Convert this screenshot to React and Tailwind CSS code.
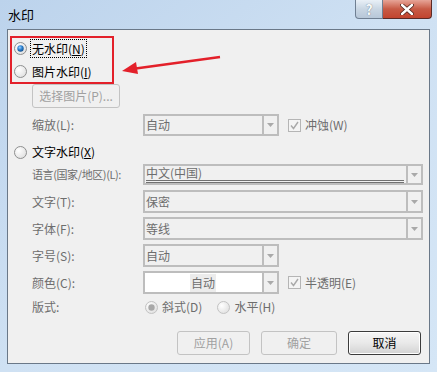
import React from "react";

const font = { fontFamily: '"Noto Sans CJK SC", "Noto Sans", sans-serif' };

const Radio = ({ checked = false, disabled = false }) => (
  <svg width="13" height="13" viewBox="0 0 13 13" className="shrink-0">
    <defs>
      <radialGradient id="rbg" cx="0.35" cy="0.35" r="0.8">
        <stop offset="0" stopColor="#ffffff" />
        <stop offset="1" stopColor="#dcdcdc" />
      </radialGradient>
      <radialGradient id="rdot" cx="0.4" cy="0.35" r="0.7">
        <stop offset="0" stopColor="#9fd4ff" />
        <stop offset="0.5" stopColor="#2a80d0" />
        <stop offset="1" stopColor="#134c86" />
      </radialGradient>
    </defs>
    <circle cx="6.5" cy="6.5" r="6" fill="url(#rbg)" stroke={disabled ? "#c2c2c2" : "#8e8f8f"} />
    {checked && (
      <circle cx="6.5" cy="6.5" r="3.2" fill={disabled ? "#a8a8a8" : "url(#rdot)"} />
    )}
  </svg>
);

const Check = () => (
  <svg width="13" height="13" viewBox="0 0 13 13" className="shrink-0">
    <rect x="0.5" y="0.5" width="12" height="12" fill="#f4f4f4" stroke="#b5b5b5" />
    <path d="M3 6.5 L5.5 9.5 L10 3" fill="none" stroke="#a9a9a9" strokeWidth="1.4" />
  </svg>
);

const Arrow = () => (
  <svg width="7" height="4" viewBox="0 0 7 4">
    <path d="M0 0 H7 L3.5 4 Z" fill="#a9a9a9" />
  </svg>
);

const Combo = ({ w, text, white = false, dbl = false }) => (
  <div className={`${w} h-full flex border-2 border-[#bdbdbd] ${white ? "bg-white" : "bg-[#f0f0f0]"}`}>
    <div className="flex-1 flex items-center pl-[1px] pr-[2px] min-w-0">
      {white ? (
        <div className="flex-1 flex justify-center">
          <span className="bg-[#ececec] px-[1px] text-[#6d6d6d] leading-[18px]">{text}</span>
        </div>
      ) : dbl ? (
        <div className="flex-1 h-full flex items-center border-b-[3px] border-double border-[#707070] text-[#6d6d6d]">
          {text}
        </div>
      ) : (
        <span className="text-[#6d6d6d]">{text}</span>
      )}
    </div>
    <div className="w-[15px] border-l-2 border-[#bdbdbd] flex items-center justify-center bg-[#f0f0f0]">
      <Arrow />
    </div>
  </div>
);

const Row = ({ label, h, mt, small = false, children }) => (
  <div className={`flex items-center ${h} ${mt}`}>
    <div
      className={`w-[135px] pl-[24px] shrink-0 text-[#6d6d6d] whitespace-nowrap ${
        small ? "text-[11px] tracking-[-0.4px]" : ""
      }`}
    >
      {label}
    </div>
    <div className="h-full flex items-center gap-[9px]">{children}</div>
  </div>
);

const App = () => {
  return (
    <div
      className="w-[437px] h-[372px] relative overflow-hidden flex flex-col px-[7px] pb-[8px] bg-gradient-to-br from-[#bcd3ec] via-[#cfe1f3] to-[#d5e6f6] text-[12px] text-black"
      style={font}
    >
      {/* title bar */}
      <div className="h-[29px] flex items-start justify-between shrink-0">
        <div className="pt-[7px] pl-[1px] text-[13px] leading-[16px]">水印</div>
        <div className="flex -mr-[2px]">
          <div className="w-[28px] h-[19px] rounded-bl-[4px] border border-t-0 border-[#6f7f92] bg-gradient-to-b from-[#e9f0f7] via-[#c9d6e3] to-[#b7c7d8] flex items-center justify-center text-[#f7f9fb] font-bold text-[14px] leading-none [text-shadow:0_0_1px_#4a5a6a]">
            ?
          </div>
          <div className="w-[49px] h-[19px] rounded-br-[4px] border border-l-0 border-t-0 border-[#5b2a26] bg-gradient-to-b from-[#e6a497] via-[#c75a45] to-[#c2442f] flex items-center justify-center">
            <svg width="14" height="11" viewBox="0 0 14 11">
              <path d="M2 1 L12 10 M12 1 L2 10" stroke="#4a2019" strokeWidth="4" strokeLinecap="round" />
              <path d="M2 1 L12 10 M12 1 L2 10" stroke="#ffffff" strokeWidth="2.4" strokeLinecap="round" />
            </svg>
          </div>
        </div>
      </div>

      {/* client area */}
      <div className="flex-1 border border-[#6a7888] bg-[#f0f0f0] flex flex-col pt-[7px] relative">
        <div className="h-[23px] flex items-center pl-[6px] gap-[3px]">
          <Radio checked />
          <span className="border border-dotted border-black px-[1px] leading-[17px]">
            无水印(<span className="underline">N</span>)
          </span>
        </div>
        <div className="h-[23px] flex items-center pl-[6px] gap-[5px]">
          <Radio />
          <span>
            图片水印(<span className="underline">I</span>)
          </span>
        </div>

        <div className="h-[24px] mt-[1px] pl-[24px] flex">
          <div className="w-[88px] h-full border border-[#c3c3c3] rounded-[3px] flex items-center justify-center text-[#a0a0a0]">
            选择图片(P)...
          </div>
        </div>

        <Row label="缩放(L):" h="h-[22px]" mt="mt-[6px]">
          <Combo w="w-[136px]" text="自动" />
          <div className="flex items-center gap-[4px] text-[#6d6d6d]">
            <Check />
            <span>冲蚀(W)</span>
          </div>
        </Row>

        <div className="h-[20px] mt-[6px] flex items-center pl-[6px] gap-[5px]">
          <Radio />
          <span>
            文字水印(<span className="underline">X</span>)
          </span>
        </div>

        <Row label="语言(国家/地区)(L):" h="h-[21px]" mt="mt-[2px]" small>
          <Combo w="w-[280px]" text="中文(中国)" dbl />
        </Row>
        <Row label="文字(T):" h="h-[23px]" mt="mt-[5px]">
          <Combo w="w-[280px]" text="保密" />
        </Row>
        <Row label="字体(F):" h="h-[23px]" mt="mt-[4px]">
          <Combo w="w-[280px]" text="等线" />
        </Row>
        <Row label="字号(S):" h="h-[23px]" mt="mt-[4px]">
          <Combo w="w-[136px]" text="自动" />
        </Row>
        <Row label="颜色(C):" h="h-[23px]" mt="mt-[4px]">
          <Combo w="w-[136px]" text="自动" white />
          <div className="flex items-center gap-[4px] text-[#6d6d6d]">
            <Check />
            <span>半透明(E)</span>
          </div>
        </Row>
        <Row label="版式:" h="h-[20px]" mt="mt-[3px]">
          <div className="flex items-center gap-[4px] pl-[2px] text-[#6d6d6d]">
            <Radio checked disabled />
            <span>斜式(D)</span>
          </div>
          <div className="flex items-center gap-[4px] pl-[6px] text-[#6d6d6d]">
            <Radio disabled />
            <span>水平(H)</span>
          </div>
        </Row>

        <div className="h-[24px] mt-[14px] flex justify-end gap-[11px] pr-[8px]">
          <div className="w-[73px] h-full border border-[#c3c3c3] rounded-[3px] flex items-center justify-center text-[#a0a0a0]">
            应用(A)
          </div>
          <div className="w-[76px] h-full border border-[#c3c3c3] rounded-[3px] flex items-center justify-center text-[#a0a0a0]">
            确定
          </div>
          <div className="w-[73px] h-full border border-[#3c3c3c] rounded-[3px] flex items-center justify-center bg-gradient-to-b from-[#f6f6f6] via-[#e9e9e9] to-[#d3d3d3] shadow-[inset_0_0_0_1px_#ffffff]">
            取消
          </div>
        </div>

        {/* annotation overlay */}
        <div className="absolute left-[2px] top-[6px] w-[104px] h-[48px] border-2 border-[#e3202a] pointer-events-none" />
        <svg className="absolute left-[110px] top-[22px] pointer-events-none" width="105" height="24" viewBox="0 0 105 24">
          <path d="M102 5 L14 17" stroke="#e3202a" strokeWidth="2.5" />
          <path d="M4 19 L18 10 L20 22 Z" fill="#e3202a" />
        </svg>
      </div>
    </div>
  );
};

export default App;
